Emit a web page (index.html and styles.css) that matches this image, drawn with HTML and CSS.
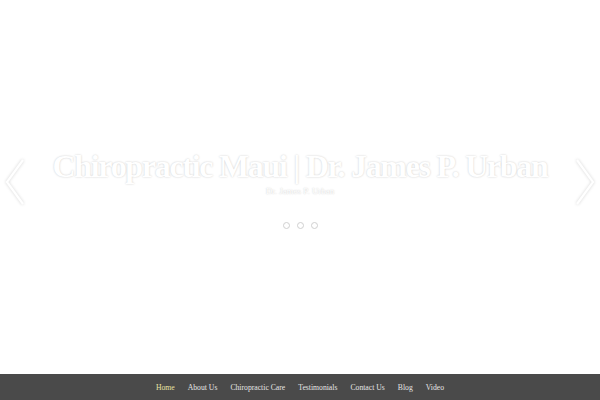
FILE: index.html
```html
<!DOCTYPE html>
<html>
<head>
<meta charset="utf-8">
<link rel="stylesheet" href="styles.css">
</head>
<body>
<div class="page">
  <section class="hero">
    <div class="arrow arrow-left">
      <svg width="22" height="48" viewBox="0 0 22 48"><polyline points="19,2 3,24 19,46" fill="none" stroke="#ffffff" stroke-width="2.2"/></svg>
    </div>
    <div class="caption">
      <h1 class="title">Chiropractic Maui | Dr. James P. Urban</h1>
      <p class="subtitle">Dr. James P. Urban</p>
      <div class="dots">
        <span class="dot"></span><span class="dot"></span><span class="dot"></span>
      </div>
    </div>
    <div class="arrow arrow-right">
      <svg width="22" height="48" viewBox="0 0 22 48"><polyline points="3,2 19,24 3,46" fill="none" stroke="#ffffff" stroke-width="2.2"/></svg>
    </div>
  </section>
  <nav class="nav">
    <a class="nav-item active">Home</a>
    <a class="nav-item">About Us</a>
    <a class="nav-item">Chiropractic Care</a>
    <a class="nav-item">Testimonials</a>
    <a class="nav-item">Contact Us</a>
    <a class="nav-item">Blog</a>
    <a class="nav-item">Video</a>
  </nav>
</div>
</body>
</html>
```
FILE: styles.css
```css
html, body { margin: 0; padding: 0; background: #ffffff; }
.page { width: 600px; height: 400px; display: flex; flex-direction: column; font-family: "Liberation Serif", serif; }
.hero { height: 374px; display: flex; align-items: center; justify-content: space-between; }
.arrow { width: 30px; display: flex; justify-content: center; padding-bottom: 10px; }
.arrow svg { filter: drop-shadow(0 0 1.5px rgba(0,0,0,0.18)); }
.caption { display: flex; flex-direction: column; align-items: center; padding-top: 4px; }
.title { margin: 0; font-size: 32px; line-height: 33px; letter-spacing: -1.3px; font-weight: bold; color: #ffffff; text-shadow: 0 0 2px rgba(0,0,0,0.22); white-space: nowrap; }
.subtitle { margin: 2px 0 0; font-size: 9px; line-height: 12px; color: #ffffff; text-shadow: 0 0 1.5px rgba(0,0,0,0.25); }
.dots { display: flex; gap: 7px; margin-top: 25px; }
.dot { width: 5px; height: 5px; border: 1.5px solid #d0d0d0; border-radius: 50%; background: #fff; }
.nav { height: 26px; background: #4a4a4a; display: flex; justify-content: center; align-items: center; gap: 13px; }
.nav-item { font-size: 7.7px; color: #e6e6e6; }
.nav-item.active { color: #e9e2a4; }
```
